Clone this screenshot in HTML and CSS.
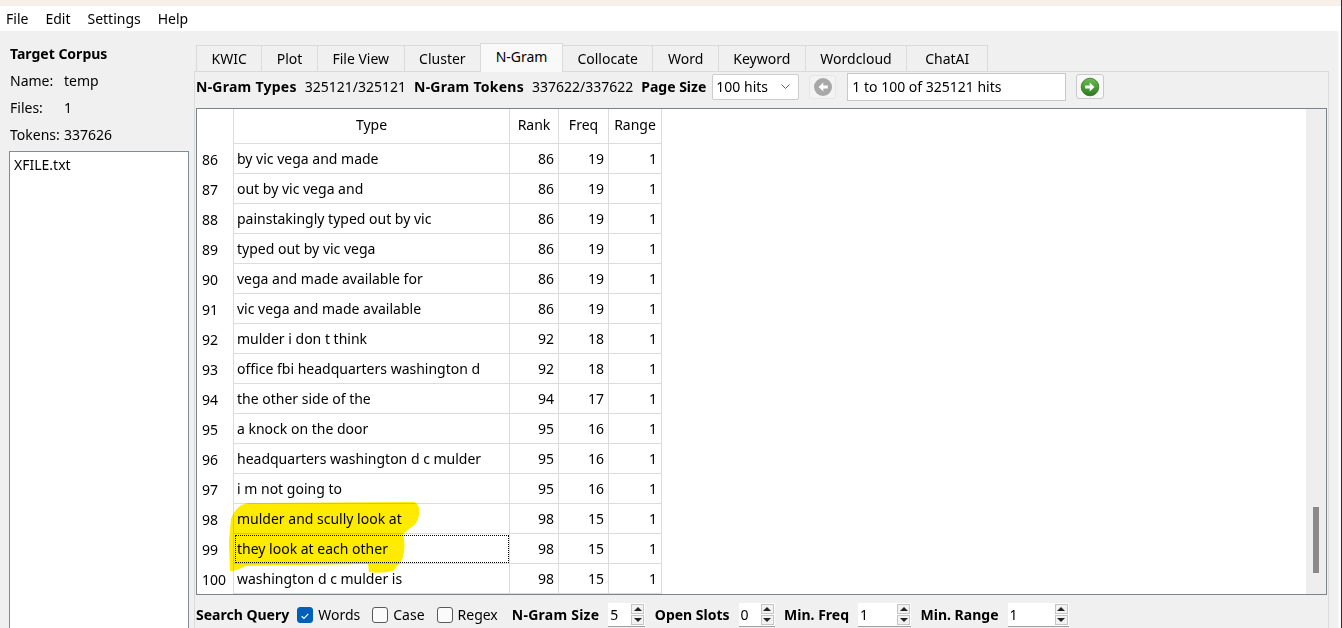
FILE: index.html
```html
<!DOCTYPE html>
<html lang="en">
<head>
<meta charset="utf-8">
<title>N-Gram</title>
<link rel="stylesheet" href="styles.css">
</head>
<body>
<div class="app">
  <div class="topstrip"></div>
  <div class="menubar">
    <span>File</span><span>Edit</span><span>Settings</span><span>Help</span>
  </div>
  <div class="main">
    <aside class="sidebar">
      <div class="title">Target Corpus</div>
      <div class="kv"><span class="k">Name:</span><span>temp</span></div>
      <div class="kv"><span class="k">Files:</span><span>1</span></div>
      <div class="kv"><span class="k">Tokens:</span><span>337626</span></div>
      <div class="filelist"><div class="file">XFILE.txt</div></div>
    </aside>
    <section class="workspace">
      <div class="tabbar">
        <div class="tab">KWIC</div>
        <div class="tab">Plot</div>
        <div class="tab">File View</div>
        <div class="tab">Cluster</div>
        <div class="tab active">N-Gram</div>
        <div class="tab">Collocate</div>
        <div class="tab">Word</div>
        <div class="tab">Keyword</div>
        <div class="tab">Wordcloud</div>
        <div class="tab">ChatAI</div>
      </div>
      <div class="pane">
        <div class="infobar">
          <span class="lbl">N-Gram Types</span>
          <span class="val">325121/325121</span>
          <span class="lbl">N-Gram Tokens</span>
          <span class="val">337622/337622</span>
          <span class="lbl ps">Page Size</span>
          <div class="combo"><span>100 hits</span>
            <svg class="chev" width="9" height="5" viewBox="0 0 9 5"><polyline points="0.5,0.5 4.5,4.5 8.5,0.5" fill="none" stroke="#606060" stroke-width="1"/></svg>
          </div>
          <div class="navbtn prev">
            <svg width="20" height="20" viewBox="0 0 20 20"><circle cx="10" cy="10" r="9" fill="#a8a8a8"/><path d="M14.8 8.5H10.3V5.4L5.5 10L10.3 14.6V11.5H14.8Z" fill="#fff"/></svg>
          </div>
          <div class="pagefield">1 to 100 of 325121 hits</div>
          <div class="navbtn next">
            <svg width="20" height="20" viewBox="0 0 20 20"><defs><linearGradient id="g" x1="0" y1="0" x2="0" y2="1"><stop offset="0" stop-color="#6bbd4e"/><stop offset="1" stop-color="#2d7a22"/></linearGradient></defs><circle cx="10" cy="10" r="8.8" fill="url(#g)" stroke="#2f6e26" stroke-width="0.8"/><path d="M5.2 8.5H9.7V5.4L14.5 10L9.7 14.6V11.5H5.2Z" fill="#fff"/></svg>
          </div>
        </div>
        <div class="tablebox">
          <div class="grid">
            <div class="h corner"></div><div class="h">Type</div><div class="h">Rank</div><div class="h">Freq</div><div class="h">Range</div>
            <div class="rn">86</div><div class="ty">by vic vega and made</div><div class="num">86</div><div class="num">19</div><div class="num">1</div>
            <div class="rn">87</div><div class="ty">out by vic vega and</div><div class="num">86</div><div class="num">19</div><div class="num">1</div>
            <div class="rn">88</div><div class="ty">painstakingly typed out by vic</div><div class="num">86</div><div class="num">19</div><div class="num">1</div>
            <div class="rn">89</div><div class="ty">typed out by vic vega</div><div class="num">86</div><div class="num">19</div><div class="num">1</div>
            <div class="rn">90</div><div class="ty">vega and made available for</div><div class="num">86</div><div class="num">19</div><div class="num">1</div>
            <div class="rn">91</div><div class="ty">vic vega and made available</div><div class="num">86</div><div class="num">19</div><div class="num">1</div>
            <div class="rn">92</div><div class="ty">mulder i don t think</div><div class="num">92</div><div class="num">18</div><div class="num">1</div>
            <div class="rn">93</div><div class="ty">office fbi headquarters washington d</div><div class="num">92</div><div class="num">18</div><div class="num">1</div>
            <div class="rn">94</div><div class="ty">the other side of the</div><div class="num">94</div><div class="num">17</div><div class="num">1</div>
            <div class="rn">95</div><div class="ty">a knock on the door</div><div class="num">95</div><div class="num">16</div><div class="num">1</div>
            <div class="rn">96</div><div class="ty">headquarters washington d c mulder</div><div class="num">95</div><div class="num">16</div><div class="num">1</div>
            <div class="rn">97</div><div class="ty">i m not going to</div><div class="num">95</div><div class="num">16</div><div class="num">1</div>
            <div class="rn">98</div><div class="ty">mulder and scully look at</div><div class="num">98</div><div class="num">15</div><div class="num">1</div>
            <div class="rn">99</div><div class="ty focus">they look at each other</div><div class="num">98</div><div class="num">15</div><div class="num">1</div>
            <div class="rn">100</div><div class="ty">washington d c mulder is</div><div class="num">98</div><div class="num">15</div><div class="num">1</div>
          </div>
          <div class="filler"></div>
          <div class="scrollbar"><div class="thumb"></div></div>
          <svg class="marker" width="1131" height="487" viewBox="196 108 1131 487">
            <path d="M247 502 L413 501 Q420 504 418 514 Q417 523 408 528 L402 533 Q405 545 402 556 Q400 562 396 565 L392 570 Q380 573 368 571 L367 563 L245 565 Q235 570 229 570 L228 540 L230 518 Q235 504 247 502 Z" fill="#ffeb00"/>
          </svg>
        </div>
        <div class="querybar">
          <span class="lbl">Search Query</span>
          <label class="check"><span class="box on"><svg width="16" height="16" viewBox="0 0 16 16"><polyline points="4.2,8.3 6.8,10.8 11.8,5.6" fill="none" stroke="#fff" stroke-width="1.3"/></svg></span>Words</label>
          <label class="check"><span class="box"></span>Case</label>
          <label class="check last"><span class="box"></span>Regex</label>
          <span class="lbl wide">N-Gram Size</span>
          <div class="spin w37"><span class="sv">5</span><div class="sbtns"><span class="up"></span><span class="dn"></span></div></div>
          <span class="lbl">Open Slots</span>
          <div class="spin w36"><span class="sv">0</span><div class="sbtns"><span class="up"></span><span class="dn"></span></div></div>
          <span class="lbl">Min. Freq</span>
          <div class="spin w53"><span class="sv">1</span><div class="sbtns"><span class="up"></span><span class="dn"></span></div></div>
          <span class="lbl">Min. Range</span>
          <div class="spin w61"><span class="sv">1</span><div class="sbtns"><span class="up"></span><span class="dn"></span></div></div>
        </div>
      </div>
    </section>
    <div class="rightgap"></div>
  </div>
</div>
<div class="winedge"></div>
</body>
</html>
```
FILE: styles.css
```css
html, body {
  margin: 0;
  padding: 0;
}
body {
  width: 1342px;
  height: 628px;
  overflow: hidden;
  display: flex;
  background: #f0f0f0;
  color: #000;
  font-family: "Noto Sans", "Liberation Sans", sans-serif;
  font-size: 14px;
}
.app {
  width: 1341px;
  display: flex;
  flex-direction: column;
}
.winedge {
  width: 1px;
  background: #2b2b2b;
}
.topstrip {
  height: 6px;
  background: #f6efea;
}
.menubar {
  height: 25px;
  background: #fff;
  display: flex;
  align-items: center;
  gap: 17px;
  padding-left: 6px;
  line-height: 20px;
}
.main {
  flex: 1;
  display: flex;
  min-height: 0;
}
.sidebar {
  width: 194px;
  box-sizing: border-box;
  padding: 9px 0 0 10px;
  display: flex;
  flex-direction: column;
}
.title {
  font-weight: 700;
  line-height: 27px;
}
.kv {
  display: flex;
  line-height: 27px;
}
.k {
  width: 54px;
}
.filelist {
  margin: 3px 0 0 -1px;
  width: 180px;
  flex: 1;
  box-sizing: border-box;
  border: 1px solid #868b93;
  border-bottom: none;
  background: #fff;
  padding: 3px 4px;
}
.file {
  line-height: 20px;
}
.workspace {
  width: 1135px;
  box-sizing: border-box;
  padding-top: 14px;
  display: flex;
  flex-direction: column;
}
.tabbar {
  height: 26px;
  display: flex;
  align-items: flex-end;
  padding-left: 2px;
}
.tab {
  height: 26px;
  box-sizing: border-box;
  padding: 1px 14.5px 0;
  border: 1px solid #dadada;
  border-bottom: none;
  margin-left: -1px;
  display: flex;
  align-items: center;
  background: #f0f0f0;
  line-height: 20px;
}
.tab:first-child {
  margin-left: 0;
}
.tab:last-child {
  padding: 1px 18px 0;
}
.tab.active {
  height: 29px;
  padding: 0 14.5px 2px;
  background: #f9f9f9;
  margin-bottom: -1px;
  position: relative;
  z-index: 1;
}
.pane {
  flex: 1;
  min-height: 0;
  border: 1px solid #dadada;
  border-bottom: none;
  padding-left: 1px;
  display: flex;
  flex-direction: column;
}
.infobar {
  height: 29px;
  margin-bottom: 7px;
  display: flex;
  align-items: center;
  white-space: nowrap;
}
.lbl {
  font-weight: 700;
}
.infobar .lbl {
  margin-right: 8px;
  letter-spacing: 0.25px;
}
.infobar .lbl.ps {
  letter-spacing: 0;
  margin-right: 6px;
}
.infobar .val {
  margin-right: 8px;
}
.combo {
  width: 87px;
  height: 26px;
  box-sizing: border-box;
  border: 1px solid #cdcdcd;
  border-radius: 2px;
  background: #fff;
  display: flex;
  align-items: center;
  justify-content: space-between;
  padding: 0 8px 0 3px;
  margin-right: 10px;
}
.navbtn {
  box-sizing: border-box;
  display: flex;
  align-items: center;
  justify-content: center;
  border-radius: 3px;
}
.navbtn.prev {
  width: 27px;
  height: 24px;
  border: 1px solid #e6e6e6;
  background: #f3f3f3;
  margin-right: 11px;
}
.navbtn.next {
  width: 28px;
  height: 25px;
  border: 1px solid #c9c9c9;
  background: #f8f8f8;
  margin-left: 10px;
}
.pagefield {
  width: 219px;
  height: 28px;
  box-sizing: border-box;
  border: 1px solid #c8c8c8;
  background: #fff;
  padding-left: 4px;
  display: flex;
  align-items: center;
}
.tablebox {
  width: 1131px;
  height: 487px;
  box-sizing: border-box;
  border: 1px solid #7c838b;
  background: #fff;
  display: flex;
  position: relative;
}
.grid {
  display: grid;
  grid-template-columns: 37px 276px 49px 50px 53px;
  grid-template-rows: 35px;
  grid-auto-rows: 30px;
}
.grid > div {
  box-sizing: border-box;
  border-right: 1px solid #dcdcdc;
  border-bottom: 1px solid #dcdcdc;
  display: flex;
  align-items: center;
  white-space: nowrap;
  overflow: hidden;
}
.grid > .h {
  justify-content: center;
  padding-bottom: 3px;
}
.grid > .corner,
.grid > .rn {
  border-bottom: none;
}
.rn {
  padding-left: 5px;
}
.ty {
  padding-left: 3px;
}
.num {
  justify-content: flex-end;
  padding-right: 4px;
}
.grid > .focus {
  outline: 1px dotted #000;
  outline-offset: -2px;
}
.filler {
  flex: 1;
}
.scrollbar {
  width: 20px;
  background: #eeeeee;
  display: flex;
  justify-content: center;
  padding-top: 398px;
  box-sizing: border-box;
}
.thumb {
  width: 6px;
  height: 66px;
  background: #898989;
}
.marker {
  position: absolute;
  left: 0;
  top: 0;
  mix-blend-mode: multiply;
  pointer-events: none;
}
.querybar {
  flex: 1;
  display: flex;
  align-items: flex-start;
  padding-top: 8px;
  white-space: nowrap;
}
.querybar > * {
  height: 24px;
  line-height: 24px;
}
.querybar .lbl {
  margin-right: 9px;
}
.querybar .lbl:first-child {
  margin-right: 8px;
}
.querybar .lbl.wide {
  letter-spacing: 0.25px;
}
.check {
  display: flex;
  align-items: center;
  gap: 5px;
  margin-right: 12px;
}
.check.last {
  margin-right: 14px;
}
.box {
  width: 16px;
  height: 16px;
  box-sizing: border-box;
  border: 1px solid #5a5a5a;
  border-radius: 3px;
  background: #fbfbfb;
  display: flex;
}
.box.on {
  border-color: #005fb8;
  background: #005fb8;
}
.spin {
  box-sizing: border-box;
  display: flex;
  justify-content: space-between;
  background: #fff;
  border-bottom: 1px solid #a0a0a0;
  margin-right: 9.5px;
}
.w37 { width: 37px; }
.w36 { width: 36px; }
.w53 { width: 53px; }
.w61 { width: 61px; }
.sv {
  padding-left: 2px;
}
.sbtns {
  width: 13px;
  display: flex;
  flex-direction: column;
  gap: 1px;
  padding: 1px 1px 1px 0;
}
.sbtns span {
  flex: 1;
  box-sizing: border-box;
  border: 1px solid #c6c6c6;
  background: #f2f2f2;
  display: flex;
  align-items: center;
  justify-content: center;
}
.sbtns .up::before {
  content: "";
  border-left: 4px solid transparent;
  border-right: 4px solid transparent;
  border-bottom: 4px solid #222;
}
.sbtns .dn::before {
  content: "";
  border-left: 4px solid transparent;
  border-right: 4px solid transparent;
  border-top: 4px solid #222;
}
.rightgap {
  width: 12px;
  background: linear-gradient(to right, #f0f0f0 9px, #fafafa 9px);
}
```
